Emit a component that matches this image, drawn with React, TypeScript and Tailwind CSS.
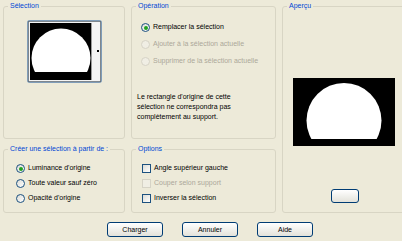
import type { ReactNode } from 'react';

const font = { fontFamily: '"Liberation Sans", Arial, sans-serif' };

function Group({ title, className, children }: { title: string; className: string; children?: ReactNode }) {
  return (
    <fieldset className={`border border-[#D8D5C4] rounded-[3px] ${className}`}>
      <legend className="ml-[4px] px-[2px] text-[7px] leading-[10px] text-[#0046D5]">{title}</legend>
      {children}
    </fieldset>
  );
}

function Radio({ label, checked, disabled }: { label: string; checked?: boolean; disabled?: boolean }) {
  return (
    <div className="flex items-center h-full">
      <span
        className={`w-[9px] h-[9px] rounded-full border flex items-center justify-center ${
          disabled ? 'border-[#D6D3C6] bg-[#F0EEE4]' : 'border-[#1C5180] bg-gradient-to-br from-[#DCDCD6] to-white'
        }`}
      >
        {checked && <span className="w-[4px] h-[4px] rounded-full bg-[#21A121]" />}
      </span>
      <span className={`ml-[3px] text-[7px] ${disabled ? 'text-[#ACA899]' : 'text-black'}`}>{label}</span>
    </div>
  );
}

function Check({ label, disabled }: { label: string; disabled?: boolean }) {
  return (
    <div className="flex items-center h-full">
      <span
        className={`w-[9px] h-[9px] border ${
          disabled ? 'border-[#D6D3C6] bg-[#F0EEE4]' : 'border-[#1C5180] bg-gradient-to-br from-[#DCDCD6] to-white'
        }`}
      />
      <span className={`ml-[3px] text-[7px] ${disabled ? 'text-[#ACA899]' : 'text-black'}`}>{label}</span>
    </div>
  );
}

function XpButton({ label, className }: { label?: string; className: string }) {
  return (
    <button
      className={`border border-[#003C74] rounded-[3px] bg-gradient-to-b from-white to-[#E3E2DA] text-[7px] text-black leading-none ${className}`}
    >
      {label}
    </button>
  );
}

export default function App() {
  return (
    <div className="w-[402px] h-[241px] overflow-hidden bg-[#EDEAD9]" style={font}>
      <div className="flex gap-[6px] pl-[3px] pt-[1px]">
        {/* left column */}
        <div className="w-[122px] flex flex-col gap-[5px] shrink-0">
          <Group title="Sélection" className="h-[138px]">
            <div className="flex justify-center mt-[9px] pl-[1px]">
              <svg width="75" height="63" viewBox="0 0 75 63">
                <defs>
                  <clipPath id="selclip">
                    <rect x="3" y="3" width="61" height="49" />
                  </clipPath>
                </defs>
                <rect x="0.75" y="0.75" width="73.5" height="61.5" rx="2" fill="#F4F4F4" stroke="#7F9DB9" strokeWidth="1.5" />
                <rect x="1.5" y="1.5" width="72" height="60" fill="none" stroke="#444" strokeDasharray="1 1" />
                <rect x="3" y="3" width="61" height="57" fill="#000" />
                <rect x="64" y="3" width="1" height="57" fill="#9A9A9A" />
                <circle cx="34" cy="38" r="29.5" fill="#fff" clipPath="url(#selclip)" />
                <rect x="70" y="30" width="2" height="2" fill="#000" />
              </svg>
            </div>
          </Group>
          <Group title="Créer une sélection à partir de :" className="h-[69px]">
            <div className="pl-[12px] mt-[7px]">
              <div className="h-[15px]"><Radio label="Luminance d'origine" checked /></div>
              <div className="h-[15px]"><Radio label="Toute valeur sauf zéro" /></div>
              <div className="h-[15px]"><Radio label="Opacité d'origine" /></div>
            </div>
          </Group>
        </div>

        {/* middle column */}
        <div className="w-[145px] flex flex-col gap-[5px] shrink-0">
          <Group title="Opération" className="h-[138px]">
            <div className="pl-[9px] mt-[8px]">
              <div className="h-[17px]"><Radio label="Remplacer la sélection" checked /></div>
              <div className="h-[17px]"><Radio label="Ajouter à la sélection actuelle" disabled /></div>
              <div className="h-[17px]"><Radio label="Supprimer de la sélection actuelle" disabled /></div>
            </div>
            <p className="pl-[5px] mt-[22px] text-[7px] leading-[10px] text-black">
              Le rectangle d'origine de cette
              <br />
              sélection ne correspondra pas
              <br />
              complètement au support.
            </p>
          </Group>
          <Group title="Options" className="h-[69px]">
            <div className="pl-[10px] mt-[7px]">
              <div className="h-[15px]"><Check label="Angle supérieur gauche" /></div>
              <div className="h-[15px]"><Check label="Couper selon support" disabled /></div>
              <div className="h-[15px]"><Check label="Inverser la sélection" /></div>
            </div>
          </Group>
        </div>

        {/* right column */}
        <div className="w-[130px] shrink-0">
          <Group title="Aperçu" className="h-[212px]">
            <div className="flex flex-col items-start pl-[10px]">
              <svg className="mt-[67px]" width="102" height="68" viewBox="0 0 102 68">
                <defs>
                  <clipPath id="prevclip">
                    <rect x="0" y="0" width="102" height="61" />
                  </clipPath>
                </defs>
                <rect width="102" height="68" fill="#000" />
                <circle cx="51" cy="42.5" r="37.5" fill="#fff" clipPath="url(#prevclip)" />
              </svg>
              <XpButton className="mt-[43px] ml-[38px] w-[28px] h-[14px]" />
            </div>
          </Group>
        </div>
      </div>

      {/* buttons */}
      <div className="flex gap-[19px] pl-[107px] mt-[9px]">
        <XpButton label="Charger" className="w-[56px] h-[15px]" />
        <XpButton label="Annuler" className="w-[56px] h-[15px]" />
        <XpButton label="Aide" className="w-[56px] h-[15px]" />
      </div>
    </div>
  );
}
